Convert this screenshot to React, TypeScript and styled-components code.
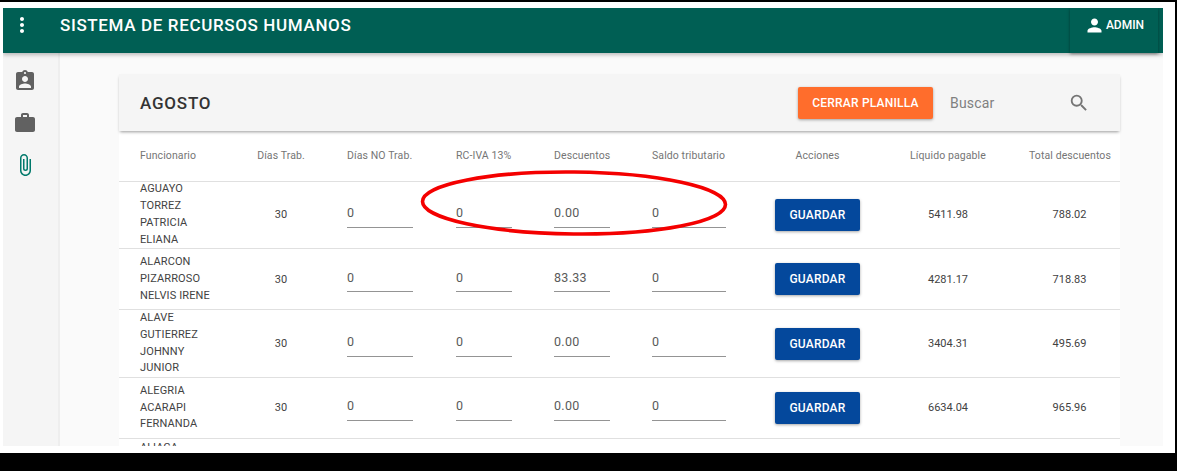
import React from "react";
import styled, { createGlobalStyle } from "styled-components";
import { MdMoreVert, MdPerson, MdAssignmentInd, MdWork, MdAttachFile, MdSearch } from "react-icons/md";

interface Employee {
  names: string[];
  days: number;
  daysOff: string;
  rcIva: string;
  discounts: string;
  balance: string;
  net: string;
  total: string;
}

const employees: Employee[] = [
  { names: ["AGUAYO", "TORREZ", "PATRICIA", "ELIANA"], days: 30, daysOff: "0", rcIva: "0", discounts: "0.00", balance: "0", net: "5411.98", total: "788.02" },
  { names: ["ALARCON", "PIZARROSO", "NELVIS IRENE"], days: 30, daysOff: "0", rcIva: "0", discounts: "83.33", balance: "0", net: "4281.17", total: "718.83" },
  { names: ["ALAVE", "GUTIERREZ", "JOHNNY", "JUNIOR"], days: 30, daysOff: "0", rcIva: "0", discounts: "0.00", balance: "0", net: "3404.31", total: "495.69" },
  { names: ["ALEGRIA", "ACARAPI", "FERNANDA"], days: 30, daysOff: "0", rcIva: "0", discounts: "0.00", balance: "0", net: "6634.04", total: "965.96" },
];

const GlobalStyle = createGlobalStyle`
  html, body {
    margin: 0;
    height: 471px;
    overflow: hidden;
    background: #000;
    font-family: Roboto, "Liberation Sans", sans-serif;
  }
`;

const Sheet = styled.div`
  width: 1160px;
  height: 438px;
  margin: 2px 2px 18px 0;
  padding: 6px 12px 7px 3px;
  background: #fff;
`;

const Frame = styled.div`
  position: relative;
  width: 1160px;
  height: 438px;
  overflow: hidden;
  display: flex;
  flex-direction: column;
  background: #fafafa;
`;

const AppBar = styled.header`
  flex: 0 0 45px;
  display: flex;
  align-items: center;
  background: #005f54;
  color: #fff;
  box-shadow: 0 2px 4px rgba(0, 0, 0, 0.25);
  z-index: 2;
`;

const MenuIcon = styled.span`
  display: flex;
  margin-left: 7px;
  margin-top: -11px;
  font-size: 24px;
`;

const Title = styled.h1`
  flex: 1;
  margin: -11px 0 0 26px;
  font-size: 17px;
  font-weight: 500;
  letter-spacing: 0.64px;
`;

const AdminButton = styled.button`
  width: 88px;
  height: 45px;
  margin-right: 5px;
  padding: 0 0 11px;
  display: flex;
  align-items: center;
  justify-content: center;
  gap: 1px;
  border: 0;
  background: #005f54;
  color: #fff;
  font: 500 12px Roboto, sans-serif;
  box-shadow: 0 1px 3px rgba(0, 0, 0, 0.4);
  svg {
    font-size: 21px;
  }
`;

const Body = styled.div`
  flex: 1;
  display: flex;
  min-height: 0;
`;

const Sidebar = styled.nav`
  flex: 0 0 57px;
  display: flex;
  flex-direction: column;
  align-items: flex-start;
  gap: 18px;
  padding: 16px 0 0 10px;
  box-sizing: border-box;
  background: #f5f5f5;
  border-right: 2px solid #eee;
`;

const NavIcon = styled.span<{ $active?: boolean }>`
  display: flex;
  font-size: 24px;
  color: ${({ $active }) => ($active ? "#00796b" : "#616161")};
`;

const Main = styled.main`
  flex: 1;
  padding: 21px 43px 0 59px;
  min-width: 0;
`;

const Toolbar = styled.div`
  position: relative;
  height: 57px;
  display: flex;
  align-items: center;
  padding: 0 30px 0 21px;
  background: #f5f5f5;
  box-shadow: 0 2px 3px -1px rgba(0, 0, 0, 0.4);
`;

const MonthTitle = styled.h2`
  flex: 1;
  margin: 0;
  font-size: 17px;
  font-weight: 500;
  letter-spacing: 0.8px;
  color: #333;
`;

const CloseButton = styled.button`
  width: 135px;
  height: 32px;
  border: 0;
  border-radius: 2px;
  background: #ff6d2c;
  color: #fff;
  font: 500 12px Roboto, sans-serif;
  letter-spacing: 0.2px;
  box-shadow: 0 1px 3px rgba(0, 0, 0, 0.35);
`;

const SearchInput = styled.input`
  width: 118px;
  margin-left: 17px;
  border: 0;
  padding: 0;
  background: transparent;
  font: 400 14px Roboto, sans-serif;
  letter-spacing: 0.2px;
  color: #444;
  outline: none;
  &::placeholder {
    color: #808080;
    opacity: 1;
  }
`;

const SearchIcon = styled.span`
  display: flex;
  font-size: 22px;
  color: #757575;
`;

const Table = styled.table`
  width: 1001px;
  table-layout: fixed;
  border-collapse: collapse;
  background: #fff;
`;

const HeadCell = styled.th<{ $align?: string; $pad?: number }>`
  height: 50px;
  padding: 0 ${({ $pad }) => $pad ?? 0}px 0 0;
  box-sizing: border-box;
  border-bottom: 1px solid #e0e0e0;
  text-align: ${({ $align }) => $align ?? "left"};
  font-size: 10.5px;
  font-weight: 400;
  letter-spacing: 0.1px;
  color: #757575;
  white-space: nowrap;
`;

const Cell = styled.td<{ $align?: string; $pad?: number }>`
  height: 61.2px;
  padding: 0 ${({ $pad }) => $pad ?? 0}px 0 0;
  box-sizing: border-box;
  border-bottom: 1px solid #e0e0e0;
  text-align: ${({ $align }) => $align ?? "left"};
  font-size: 11px;
  color: #424242;
`;

const Names = styled.div`
  margin: -0.3px 0;
`;

const NameLine = styled.div`
  font-size: 11px;
  letter-spacing: 0.12px;
  line-height: 16.8px;
  color: #424242;
`;

const PeekRow = styled.td`
  vertical-align: top;
  font-size: 11px;
  line-height: 16.8px;
  padding: 1px 0 0;
  color: #424242;
`;

const Field = styled.input<{ $width: number }>`
  display: block;
  width: ${({ $width }) => $width}px;
  height: 29px;
  padding: 0;
  box-sizing: border-box;
  margin-bottom: 3px;
  border: 0;
  border-bottom: 1px solid #949494;
  background: transparent;
  font: 400 12.5px Roboto, sans-serif;
  letter-spacing: 0.3px;
  color: #5a5a5a;
  outline: none;
`;

const SaveButton = styled.button`
  width: 85px;
  height: 32px;
  border: 0;
  border-radius: 2px;
  background: #04489c;
  color: #fff;
  font: 500 12px Roboto, sans-serif;
  letter-spacing: 0.2px;
  box-shadow: 0 1px 3px rgba(0, 0, 0, 0.35);
`;

const Annotation = styled.svg`
  position: absolute;
  left: 415px;
  top: 158px;
  pointer-events: none;
  z-index: 3;
`;

const App = () => (
  <>
    <GlobalStyle />
    <Sheet>
      <Frame>
        <AppBar>
          <MenuIcon>
            <MdMoreVert />
          </MenuIcon>
          <Title>SISTEMA DE RECURSOS HUMANOS</Title>
          <AdminButton>
            <MdPerson />
            ADMIN
          </AdminButton>
        </AppBar>
        <Body>
          <Sidebar>
            <NavIcon>
              <MdAssignmentInd />
            </NavIcon>
            <NavIcon>
              <MdWork />
            </NavIcon>
            <NavIcon $active>
              <MdAttachFile />
            </NavIcon>
          </Sidebar>
          <Main>
            <Toolbar>
              <MonthTitle>AGOSTO</MonthTitle>
              <CloseButton>CERRAR PLANILLA</CloseButton>
              <SearchInput placeholder="Buscar" />
              <SearchIcon>
                <MdSearch />
              </SearchIcon>
            </Toolbar>
            <Table>
              <colgroup>
                <col width={138} />
                <col width={90} />
                <col width={109} />
                <col width={98} />
                <col width={98} />
                <col width={123} />
                <col width={134} />
                <col width={120} />
                <col width={91} />
              </colgroup>
              <thead>
                <tr>
                  <HeadCell style={{ paddingLeft: 21 }}>Funcionario</HeadCell>
                  <HeadCell $align="center" $pad={42}>Días Trab.</HeadCell>
                  <HeadCell>Días NO Trab.</HeadCell>
                  <HeadCell>RC-IVA 13%</HeadCell>
                  <HeadCell>Descuentos</HeadCell>
                  <HeadCell>Saldo tributario</HeadCell>
                  <HeadCell $align="center" $pad={49}>Acciones</HeadCell>
                  <HeadCell $align="center" $pad={42}>Líquido pagable</HeadCell>
                  <HeadCell $align="center" $pad={10}>Total descuentos</HeadCell>
                </tr>
              </thead>
              <tbody>
                {employees.map((e) => (
                  <tr key={e.names[0]}>
                    <Cell style={{ paddingLeft: 21 }}>
                      <Names>
                        {e.names.map((n) => (
                          <NameLine key={n}>{n}</NameLine>
                        ))}
                      </Names>
                    </Cell>
                    <Cell $align="center" $pad={42}>{e.days}</Cell>
                    <Cell>
                      <Field $width={66} value={e.daysOff} readOnly />
                    </Cell>
                    <Cell>
                      <Field $width={56} value={e.rcIva} readOnly />
                    </Cell>
                    <Cell>
                      <Field $width={56} value={e.discounts} readOnly />
                    </Cell>
                    <Cell>
                      <Field $width={74} value={e.balance} readOnly />
                    </Cell>
                    <Cell>
                      <SaveButton>GUARDAR</SaveButton>
                    </Cell>
                    <Cell $align="center" $pad={42}>{e.net}</Cell>
                    <Cell $align="center" $pad={10}>{e.total}</Cell>
                  </tr>
                ))}
                <tr>
                  <PeekRow style={{ paddingLeft: 21 }}>ALIAGA</PeekRow>
                </tr>
              </tbody>
            </Table>
          </Main>
        </Body>
        <Annotation width={320} height={84} viewBox="0 0 320 84">
          <ellipse
            cx="156"
            cy="37"
            rx="151.5"
            ry="31"
            fill="none"
            stroke="#f40000"
            strokeWidth="3.6"
            transform="rotate(0.6 156 37)"
          />
        </Annotation>
      </Frame>
    </Sheet>
  </>
);

export default App;
